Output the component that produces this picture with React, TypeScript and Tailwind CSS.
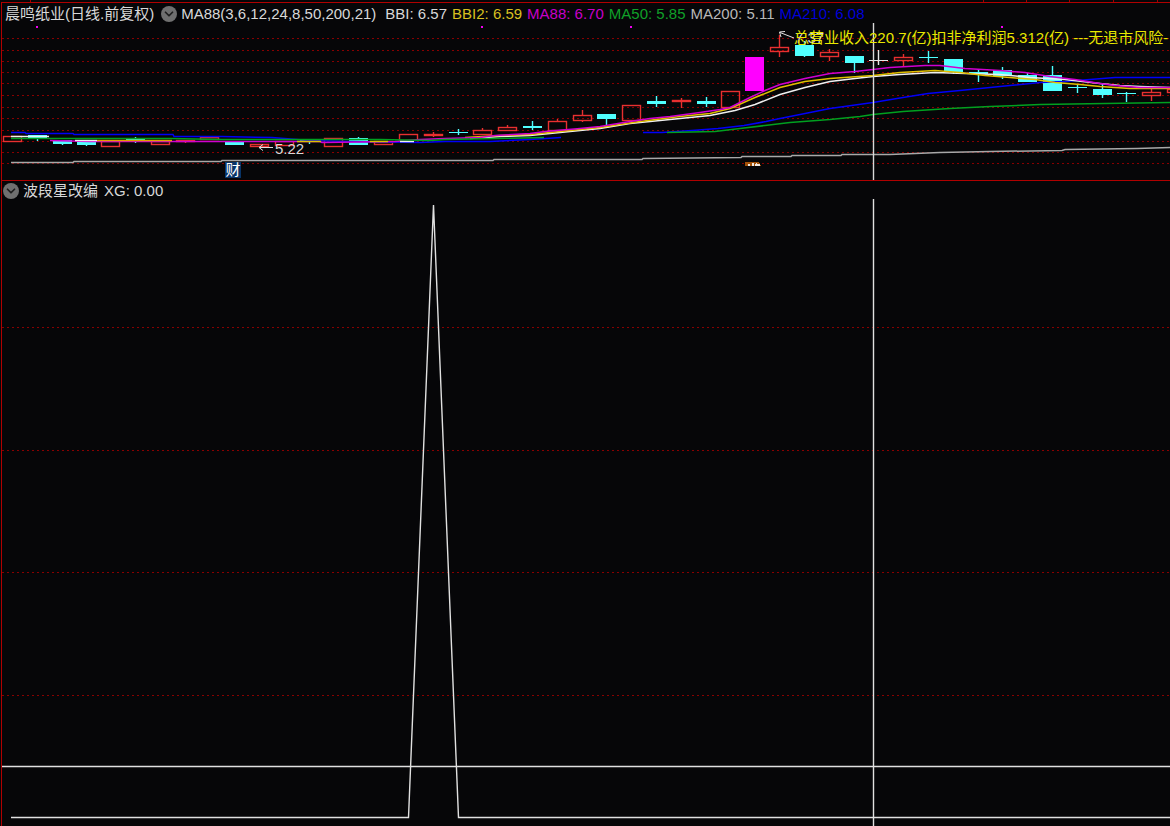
import { ChevronDown } from "lucide-react";

type Kind = "up" | "down" | "limit" | "flat";

// x, high, top, bottom, low, kind
type Candle = [number, number, number, number, number, Kind];

const candles: Candle[] = [
  [12, 136, 136, 141, 141, "up"],
  [37, 135, 135, 138, 141, "down"],
  [62, 140, 140, 144, 145, "down"],
  [86, 142, 142, 145, 146, "down"],
  [110, 141, 141, 146, 146, "up"],
  [135, 137, 139, 141, 143, "down"],
  [160, 141, 141, 144, 144, "up"],
  [185, 140, 140, 141, 143, "up"],
  [209, 137, 137, 139, 139, "up"],
  [234, 141, 141, 145, 145, "down"],
  [259, 144, 144, 146, 146, "up"],
  [284, 141, 141, 145, 145, "up"],
  [309, 140, 140, 142, 144, "down"],
  [333, 138, 138, 146, 146, "up"],
  [358, 137, 138, 145, 145, "down"],
  [383, 141, 141, 144, 144, "up"],
  [408, 134, 134, 140, 140, "up"],
  [433, 132, 134, 135, 137, "up"],
  [458, 129, 132, 133, 135, "down"],
  [482, 128, 130, 134, 134, "up"],
  [507, 125, 127, 130, 130, "up"],
  [532, 121, 126, 128, 130, "down"],
  [557, 119, 121, 130, 130, "up"],
  [582, 110, 115, 120, 122, "up"],
  [606, 114, 114, 119, 125, "down"],
  [631, 105, 105, 120, 120, "up"],
  [656, 96, 101, 104, 107, "down"],
  [681, 98, 100, 101, 108, "up"],
  [706, 97, 101, 104, 107, "down"],
  [730, 91, 91, 107, 107, "up"],
  [754, 57, 57, 91, 91, "limit"],
  [779, 35, 47, 51, 57, "up"],
  [804, 41, 45, 56, 57, "down"],
  [829, 49, 52, 56, 61, "up"],
  [854, 56, 56, 63, 73, "down"],
  [878, 50, 60, 61, 65, "flat"],
  [903, 54, 57, 60, 66, "up"],
  [928, 51, 57, 58, 63, "down"],
  [953, 59, 59, 72, 74, "down"],
  [978, 70, 72, 74, 82, "down"],
  [1002, 67, 70, 76, 79, "down"],
  [1027, 73, 75, 82, 82, "down"],
  [1052, 66, 75, 91, 91, "down"],
  [1077, 84, 87, 88, 93, "down"],
  [1102, 84, 89, 95, 98, "down"],
  [1126, 92, 93, 94, 102, "down"],
  [1151, 89, 92, 95, 101, "up"],
  [1176, 89, 89, 92, 92, "up"],
];

const averages = [
  {
    name: "MA200",
    color: "#a8a8a8",
    points:
      "11,162 73,162 74,161 221,161 222,160 493,160 494,159 642,159 643,158 741,157 742,156 791,156 792,155 841,155 842,154 890,154 940,152 990,151 1062,150 1065,149 1137,148 1170,147",
  },
  {
    name: "MA210 early",
    color: "#0000f8",
    points:
      "11,132 25,132 26,133 73,133 74,134 173,134 174,136 222,136 272,137 297,139 310,140 350,141 420,142 445,141 490,141 530,139 561,137",
  },
  {
    name: "MA210",
    color: "#0000f8",
    points:
      "643,132 662,132 692,130 718,128 744,125 766,121 780,118 805,113 830,108 873,102 903,97 928,93 960,90 990,87 1010,85 1040,82 1065,81 1090,79 1115,77 1170,77",
  },
  {
    name: "MA50",
    color: "#00a020",
    points:
      "667,132 715,131 740,128 765,125 790,122 830,119 860,116 873,114 903,111 950,108 990,106 1040,104 1170,102",
  },
  {
    name: "BBI",
    color: "#f0f0f0",
    points:
      "470,138 500,136 530,135 560,132 580,130 600,128 630,123 660,120 690,117 710,115 735,110 755,104 780,94 805,87 830,81 855,78 873,76 900,74 935,72 965,73 1000,74 1030,77 1065,79 1100,83 1120,85 1140,86 1170,87",
  },
  {
    name: "BBI2",
    color: "#e0c000",
    points:
      "465,137 500,135 530,134 560,131 600,127 640,121 680,116 710,113 730,108 755,97 780,87 805,81 830,78 873,75 900,72 935,70 960,72 985,75 1010,77 1035,79 1055,82 1080,84 1100,86 1130,88 1170,88",
  },
  {
    name: "MA88",
    color: "#d000d0",
    points:
      "50,140 90,141 320,141 322,142 395,141 420,139 445,138 480,137 495,135 530,133 545,131 580,128 600,126 630,121 650,118 670,116 700,112 720,109 730,107 750,97 765,90 780,84 805,78 830,73 855,71 873,69 890,67 925,65 940,65 965,68 1000,70 1025,72 1050,76 1075,79 1100,83 1115,85 1140,87 1170,87",
  },
  { name: "BBI2 a", color: "#e0a000", points: "97,140 172,140" },
  { name: "BBI2 b", color: "#e0c000", points: "297,141 321,141" },
  { name: "BBI2 c", color: "#e0c000", points: "370,141 388,141" },
  { name: "BBI a", color: "#f0f0f0", points: "11,136 49,136" },
  { name: "BBI b", color: "#f0f0f0", points: "75,140 97,140" },
  { name: "BBI c", color: "#f0f0f0", points: "400,141 414,141" },
  {
    name: "MA50 early",
    color: "#00a020",
    points: "11,138 50,138 170,138 222,139 380,139 430,140 445,139 495,138 544,137",
  },
];

const legend = [
  { text: "BBI: 6.57", color: "text-[#d8d8d8]" },
  { text: "BBI2: 6.59", color: "text-[#d8c020]" },
  { text: "MA88: 6.70", color: "text-[#c800c8]" },
  { text: "MA50: 5.85", color: "text-[#10a028]" },
  { text: "MA200: 5.11", color: "text-[#b8b8b8]" },
  { text: "MA210: 6.08", color: "text-[#0000d8]" },
];

const priceGrid = [38, 50, 61, 72, 83, 95, 107, 118, 130, 141, 152, 163];
const signalGrid = [327, 450, 572, 695];
const markers = [36, 481, 630, 1001];
const ticks = [30, 983, 1026, 1069, 1113, 1157];

function Grid({ rows }: { rows: number[] }) {
  return (
    <>
      {rows.map((y) => (
        <line
          key={y}
          x1={2}
          x2={1170}
          y1={y + 0.5}
          y2={y + 0.5}
          stroke="#880000"
          strokeDasharray="2 3"
        />
      ))}
    </>
  );
}

function CandleShape({ candle }: { candle: Candle }) {
  const [x, high, top, bottom, low, kind] = candle;

  if (kind === "up") {
    return (
      <g
        stroke="#e83030"
        strokeWidth={1.4}
        fill="none"
        shapeRendering="auto"
      >
        {high < top && <path d={`M${x + 0.5} ${high}V${top}`} />}
        {low > bottom && <path d={`M${x + 0.5} ${bottom}V${low}`} />}
        <rect x={x - 8.5} y={top + 0.5} width={18} height={bottom - top} />
      </g>
    );
  }

  const color =
    kind === "limit" ? "#ff00ff" : kind === "flat" ? "#e8e8e8" : "#50ffff";

  return (
    <g fill={color} shapeRendering="auto">
      <rect x={x - 0.2} y={high} width={1.4} height={low - high} />
      <rect x={x - 9} y={top} width={19} height={bottom - top} />
    </g>
  );
}

function MenuButton({ label }: { label: string }) {
  return (
    <button
      aria-label={label}
      className="flex h-4 w-4 shrink-0 items-center justify-center rounded-full bg-[#707070] text-[#202020]"
    >
      <ChevronDown size={14} strokeWidth={3} />
    </button>
  );
}

export default function App() {
  return (
    <main className="flex min-h-screen flex-col overflow-hidden bg-[#060608] font-['Liberation_Sans','Noto_Sans_CJK_SC',sans-serif] text-[15px] leading-5 whitespace-nowrap text-[#d8d8d8]">
      <svg
        className="block h-[2px] w-full"
        viewBox="0 0 1170 2"
        preserveAspectRatio="none"
        aria-hidden="true"
      >
        {ticks.map((x) => (
          <rect key={x} x={x} y={0} width={1} height={2} fill="#a00000" />
        ))}
      </svg>

      <section className="ml-px border-t border-l border-[#b00000]">
        <header className="flex h-5 items-center pt-[2px] pl-[3px]">
          <h1>晨鸣纸业(日线.前复权)</h1>
          <div className="mr-1 ml-[7px] flex">
            <MenuButton label="指标菜单" />
          </div>
          <span>MA88(3,6,12,24,8,50,200,21)</span>
          <div className="ml-[9px] flex gap-[5px]">
            {legend.map((item) => (
              <span key={item.text} className={item.color}>
                {item.text}
              </span>
            ))}
          </div>
        </header>

        <div className="relative overflow-hidden">
          <svg
            className="block h-[157px] w-full"
            viewBox="2 23 1168 157"
            preserveAspectRatio="none"
            shapeRendering="crispEdges"
            role="img"
            aria-label="日线"
          >
            <Grid rows={priceGrid} />
            {markers.map((x) => (
              <rect key={x} x={x} y={26} width={2} height={2} fill="#f000f0" />
            ))}
            {candles.map((candle) => (
              <CandleShape key={candle[0]} candle={candle} />
            ))}
            <g transform="translate(0 0.5)" shapeRendering="auto">
              {averages.map((line) => (
                <polyline
                  key={line.name}
                  points={line.points}
                  fill="none"
                  stroke={line.color}
                  strokeWidth={1.5}
                />
              ))}
            </g>
            <g stroke="#e0e0e0" fill="none" shapeRendering="auto">
              <path d="M259 147.5H273M263 144.5L259 147.5L263 150.5" />
              <path d="M780 32.5L794 38M785 31.5L779.5 32L781 37" />
            </g>
            {/* top edge of an event badge */}
            <path d="M745 162H759L761 166H745Z" fill="#a05008" />
            <path
              d="M748 164H750V166H748ZM752 163H754V166H752ZM756 163H757V164H760V166H755V164H756Z"
              fill="#f0e8e0"
            />
            <rect
              x={872.8}
              y={23}
              width={1.4}
              height={157}
              fill="#d8d8d8"
              shapeRendering="auto"
            />
          </svg>

          <span className="absolute top-[116px] left-[273px]">5.22</span>
          <span className="absolute top-[5px] left-[793px]">7.37</span>
          <span className="absolute top-[5px] left-[792px] text-[#e8e800]">
            总营业收入220.7(亿)扣非净利润5.312(亿) ---无退市风险-
          </span>
          <span className="absolute top-[139px] left-[223px] h-4 w-4 bg-[#083468] text-center leading-4 text-white">
            财
          </span>
        </div>
      </section>

      <section className="ml-px flex flex-1 flex-col border-t border-l border-[#b00000]">
        <header className="flex h-[18px] items-center gap-1 pt-[2px] pl-px">
          <MenuButton label="副图菜单" />
          <h2>波段星改编</h2>
          <span className="pl-[2px]">XG: 0.00</span>
        </header>

        <div className="flex flex-1">
          <svg
            className="block min-h-[400px] w-full"
            viewBox="2 199 1168 627"
            preserveAspectRatio="none"
            shapeRendering="crispEdges"
            role="img"
            aria-label="波段星改编"
          >
            <Grid rows={signalGrid} />
            <g fill="none" stroke="#e0e0e0" strokeWidth={1.4} shapeRendering="auto">
              <polyline points="11,817.5 408.5,817.5 433.5,205 458.5,817.5 1170,817.5" />
              <path d="M2 766.5H1170M873.5 199V826" />
            </g>
          </svg>
        </div>
      </section>
    </main>
  );
}
